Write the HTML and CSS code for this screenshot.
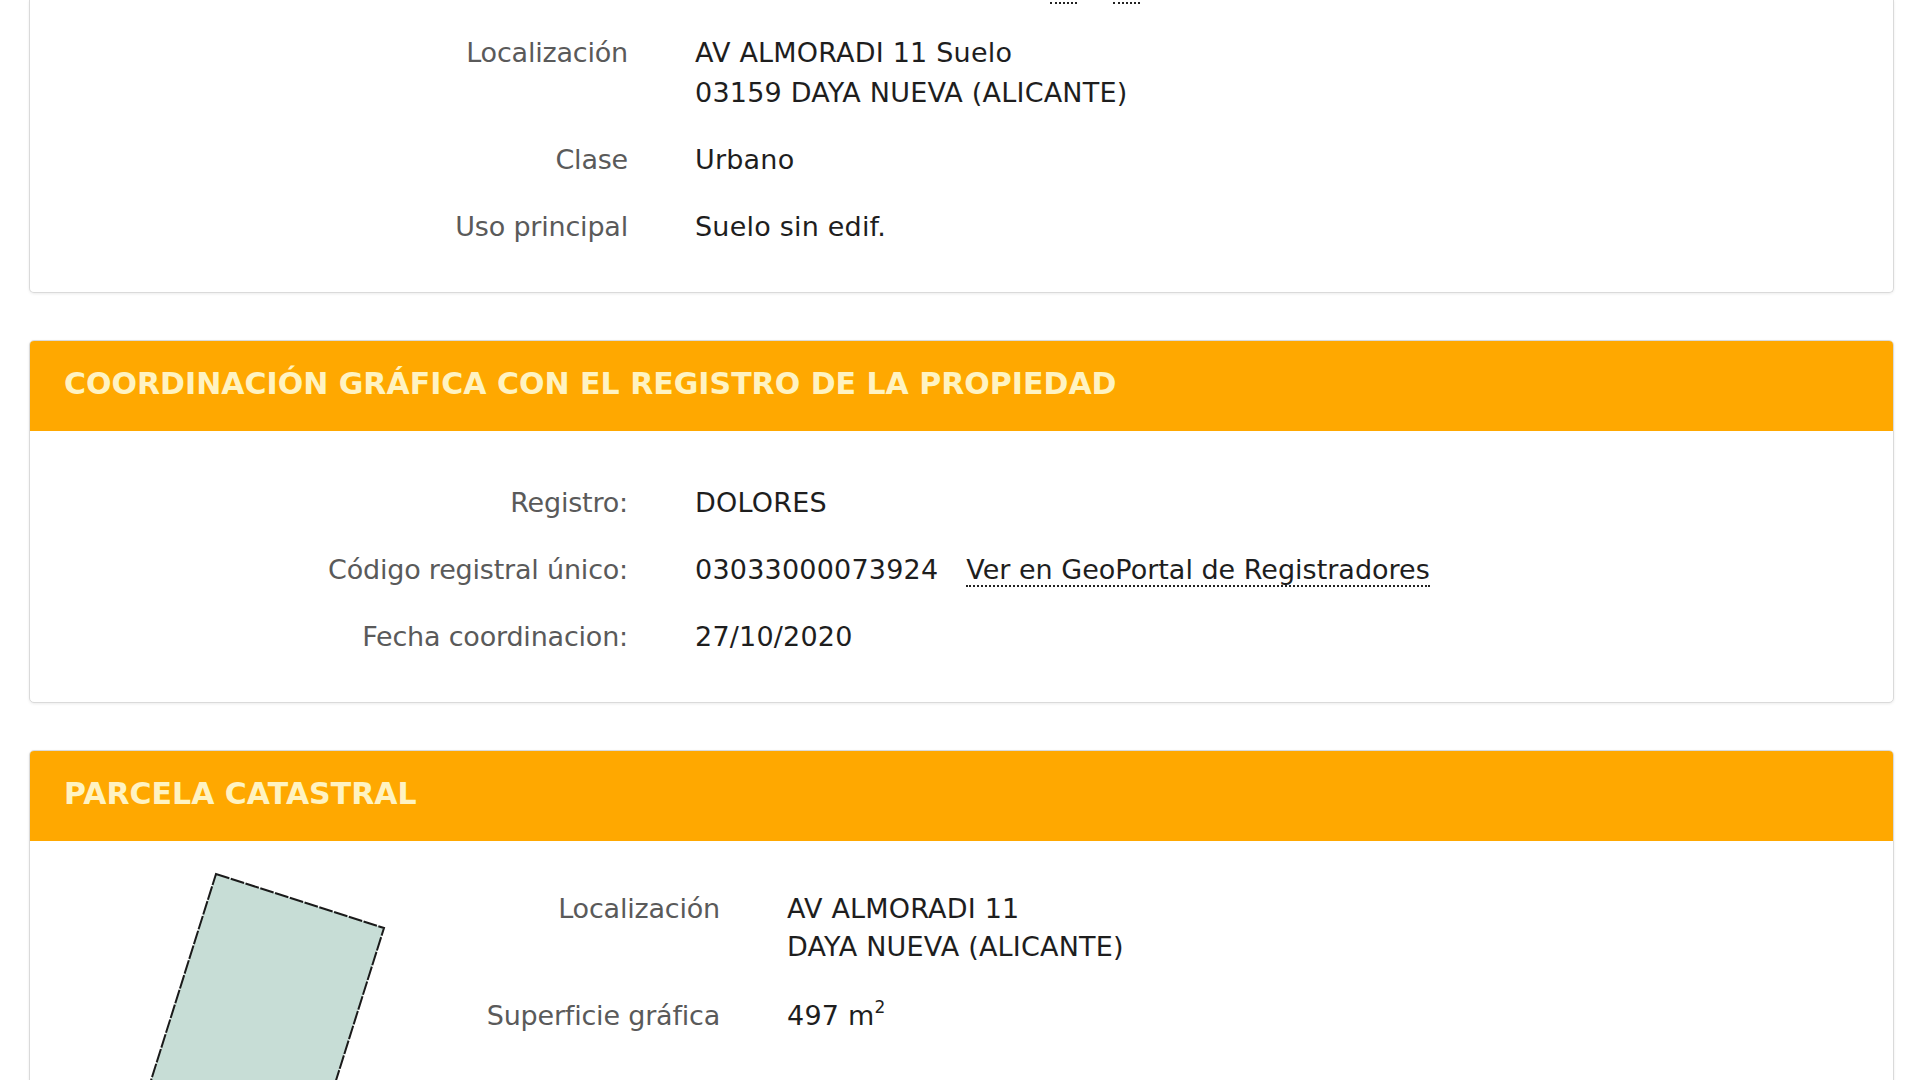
FILE: index.html
```html
<!DOCTYPE html>
<html lang="es">
<head>
    <meta charset="UTF-8">
    <title>Consulta descriptiva y gráfica</title>
    <link rel="stylesheet" href="styles.css">
</head>
<body>

<div class="page">

    <!-- continuación de la ficha del inmueble (parte superior fuera de la vista) -->
    <section class="card card-cont">
        <div class="card-body">
            <div class="row ref-tail">
                <span class="label"></span>
                <span class="value ref">
                    <a class="icon-link" href="#" title="Copiar referencia"></a>
                    <a class="icon-link" href="#" title="Información"></a>
                </span>
            </div>
            <div class="row">
                <span class="label">Localización</span>
                <span class="value">AV ALMORADI 11 Suelo<br>03159 DAYA NUEVA (ALICANTE)</span>
            </div>
            <div class="row">
                <span class="label">Clase</span>
                <span class="value">Urbano</span>
            </div>
            <div class="row">
                <span class="label">Uso principal</span>
                <span class="value">Suelo sin edif.</span>
            </div>
        </div>
    </section>

    <section class="card">
        <h2 class="card-title">COORDINACIÓN GRÁFICA CON EL REGISTRO DE LA PROPIEDAD</h2>
        <div class="card-body">
            <div class="row">
                <span class="label">Registro:</span>
                <span class="value">DOLORES</span>
            </div>
            <div class="row">
                <span class="label">Código registral único:</span>
                <span class="value">03033000073924<a class="link" href="#">Ver en GeoPortal de Registradores</a></span>
            </div>
            <div class="row">
                <span class="label">Fecha coordinacion:</span>
                <span class="value">27/10/2020</span>
            </div>
        </div>
    </section>

    <section class="card">
        <h2 class="card-title">PARCELA CATASTRAL</h2>
        <div class="card-body parcela">
            <div class="plano">
                <svg width="440" height="460" viewBox="0 0 440 460">
                    <polygon points="186,33 354,87 240,449 72,395" fill="#c7ddd6" stroke="#1a1a1a" stroke-width="2" stroke-dasharray="14 1.5"/>
                </svg>
            </div>
            <div class="parcela-datos">
                <div class="row">
                    <span class="label">Localización</span>
                    <span class="value">AV ALMORADI 11<br>DAYA NUEVA (ALICANTE)</span>
                </div>
                <div class="row">
                    <span class="label">Superficie gráfica</span>
                    <span class="value">497 m<sup>2</sup></span>
                </div>
            </div>
        </div>
    </section>

</div>

</body>
</html>
```

FILE: styles.css
```css
body { margin: 0; background-color: #fff; font-family: "DejaVu Sans", Verdana, sans-serif; font-size: 27px; color: #1e1e1e; overflow: hidden; }
.page { padding: 0 26px 0 29px; }
.card { background: #fff; border: 1px solid #dadada; border-radius: 5px; box-shadow: 0 1px 3px rgba(0,0,0,0.08); margin-bottom: 47px; overflow: hidden; }
.card-cont { border-top: none; border-top-left-radius: 0; border-top-right-radius: 0; }
.card-title { margin: 0; height: 90px; line-height: 86px; padding-left: 34px; background-color: #ffa800; color: #fff3c2; font-size: 30px; font-weight: bold; }
.card-body { padding: 52px 0 45px; }
.card-cont .card-body { padding-top: 0; }
.row { display: grid; grid-template-columns: 598px auto; column-gap: 67px; line-height: 40px; margin-bottom: 27px; }
.row:last-child { margin-bottom: 0; }
.label { text-align: right; color: #5a5a5a; letter-spacing: -0.2px; }
.value { color: #1e1e1e; letter-spacing: 0.2px; }
.value sup { font-size: 17px; line-height: 0; vertical-align: 12px; }
.ref-tail { height: 4px; line-height: 0; margin-bottom: 29px; }
.ref { display: flex; gap: 36px; padding-left: 355px; }
.icon-link { display: block; width: 27px; height: 2px; border-bottom: 2px dotted #222; }
.link { margin-left: 28px; color: #1e1e1e; letter-spacing: 0; text-decoration: none; border-bottom: 2px dotted #222; }
.parcela { display: flex; padding: 0; min-height: 400px; }
.plano { width: 440px; flex-shrink: 0; }
.plano svg { display: block; }
.parcela-datos { padding-top: 49px; }
.parcela-datos .row { grid-template-columns: 250px auto; line-height: 38px; margin-bottom: 31px; }
```
